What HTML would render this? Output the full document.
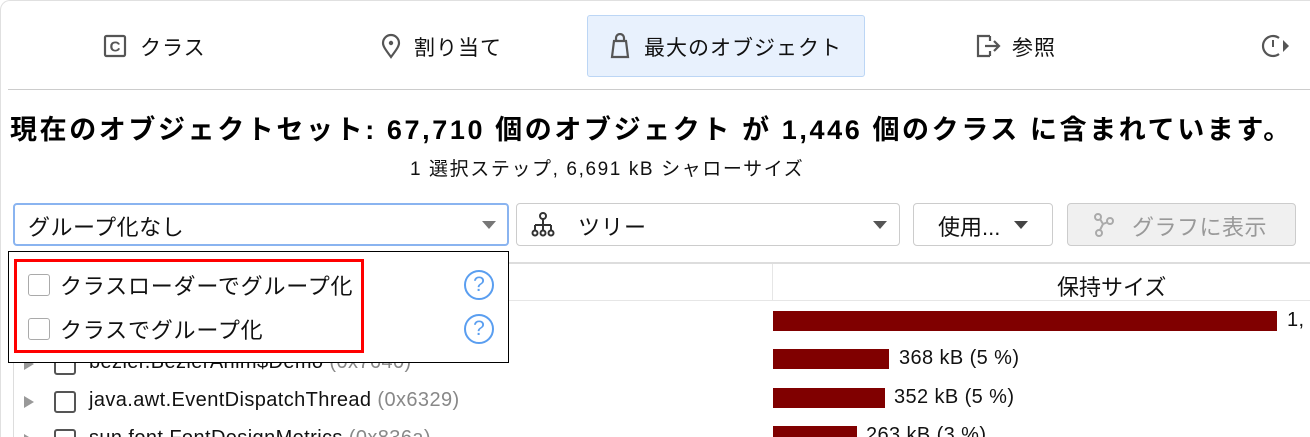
<!DOCTYPE html>
<html><head><meta charset="utf-8"><style>
*{box-sizing:border-box;margin:0;padding:0}
html,body{width:1310px;height:437px;overflow:hidden}
body{background:#fff;font-family:"Liberation Sans","Noto Sans CJK JP",sans-serif;color:#111;position:relative}
.a{position:absolute;white-space:nowrap}
.tab{font-size:21px;top:32px;letter-spacing:1px}
.cb{position:absolute;width:22px;height:22px;border:2px solid #555;border-radius:3px;background:#fff}
.bar{position:absolute;background:#800000;height:20px;left:773px}
.rt{font-size:20px;letter-spacing:0.4px}
.help{position:absolute;width:30px;height:30px;border:2.5px solid #5a9ef0;border-radius:50%;color:#5a9ef0;font-size:21px;text-align:center;line-height:25px}
</style></head><body>
<div class="a" style="left:0;top:0;width:1310px;height:437px;border-left:1px solid #e0e0e0;border-top:1px solid #e0e0e0;border-top-left-radius:10px"></div>
<div class="a" style="left:587px;top:15px;width:278px;height:62px;background:#e8f1fd;border:1px solid #bcd6f5;border-radius:3px"></div>
<svg class="a" style="left:103px;top:34px" width="24" height="24" viewBox="0 0 24 24"><rect x="2" y="2" width="20" height="20" rx="1.5" fill="none" stroke="#555" stroke-width="2.2"/><text x="12" y="17.5" font-size="15" font-weight="bold" text-anchor="middle" fill="#555" font-family="Liberation Sans">C</text></svg>
<div class="a tab" style="left:140px">クラス</div>
<svg class="a" style="left:379px;top:33px" width="24" height="26" viewBox="0 0 24 26"><path d="M12 24C6 16 4 13 4 10a8 8 0 0 1 16 0c0 3-2 6-8 14z" fill="none" stroke="#555" stroke-width="2.2"/><circle cx="12" cy="10" r="2.2" fill="#555"/></svg>
<div class="a tab" style="left:414px">割り当て</div>
<svg class="a" style="left:608px;top:33px" width="24" height="26" viewBox="0 0 24 26"><path d="M4 24h16l-2-16H6z M8 8V5a4 4 0 0 1 8 0v3" fill="none" stroke="#555" stroke-width="2.2"/></svg>
<div class="a tab" style="left:644px">最大のオブジェクト</div>
<svg class="a" style="left:976px;top:34px" width="26" height="24" viewBox="0 0 26 24"><path d="M14 2H2v20h12M14 2v5M14 22v-5M9 12h14M18 7l5 5-5 5" fill="none" stroke="#555" stroke-width="2.2"/></svg>
<div class="a tab" style="left:1012px">参照</div>
<svg class="a" style="left:1261px;top:34px" width="30" height="24" viewBox="0 0 30 24"><path d="M18 4a10 10 0 1 0 0 16" fill="none" stroke="#555" stroke-width="2.2"/><path d="M12 6v7" stroke="#555" stroke-width="2"/><path d="M22 6l6 6-6 6z" fill="#555"/></svg>
<div class="a" style="left:8px;top:89px;width:1302px;height:1px;background:#ccc"></div>
<div class="a" style="left:10px;top:108px;font-size:27px;font-weight:bold;letter-spacing:2.6px;color:#000">現在のオブジェクトセット: 67,710 個のオブジェクト が 1,446 個のクラス に含まれています。</div>
<div class="a" style="left:410px;top:154px;font-size:19px;letter-spacing:1.6px">1 選択ステップ, 6,691 kB シャローサイズ</div>
<div class="a" style="left:13px;top:203px;width:496px;height:43px;border:2px solid #8ab4f0;border-radius:4px"></div>
<div class="a" style="left:28px;top:210px;font-size:22px;letter-spacing:0.5px">グループ化なし</div>
<div class="a" style="left:482px;top:221px;border-left:7px solid transparent;border-right:7px solid transparent;border-top:8px solid #777"></div>
<div class="a" style="left:516px;top:203px;width:384px;height:43px;border:1px solid #ccc;border-radius:4px"></div>
<svg class="a" style="left:530px;top:212px" width="26" height="26" viewBox="0 0 26 26"><circle cx="13" cy="4" r="3" fill="none" stroke="#333" stroke-width="2"/><path d="M13 7v6M5 13h16M5 13v6M13 13v6M21 13v6" stroke="#333" stroke-width="2" fill="none"/><circle cx="5" cy="21" r="2.5" fill="none" stroke="#333" stroke-width="2"/><circle cx="13" cy="21" r="2.5" fill="none" stroke="#333" stroke-width="2"/><circle cx="21" cy="21" r="2.5" fill="none" stroke="#333" stroke-width="2"/></svg>
<div class="a" style="left:578px;top:210px;font-size:22px;letter-spacing:1px">ツリー</div>
<div class="a" style="left:873px;top:221px;border-left:7px solid transparent;border-right:7px solid transparent;border-top:8px solid #555"></div>
<div class="a" style="left:913px;top:203px;width:140px;height:43px;border:1px solid #ccc;border-radius:4px"></div>
<div class="a" style="left:938px;top:210px;font-size:22px">使用...</div>
<div class="a" style="left:1014px;top:221px;border-left:7px solid transparent;border-right:7px solid transparent;border-top:8px solid #444"></div>
<div class="a" style="left:1067px;top:203px;width:229px;height:43px;border:1px solid #ccc;border-radius:4px;background:#f0f0f0"></div>
<svg class="a" style="left:1092px;top:212px" width="24" height="26" viewBox="0 0 24 26"><g fill="none" stroke="#aaa" stroke-width="2"><circle cx="6" cy="5" r="3"/><circle cx="18" cy="9" r="3"/><circle cx="7" cy="21" r="3"/><path d="M8 7l3 5 5-2M11 12l-3 6"/></g></svg>
<div class="a" style="left:1132px;top:210px;font-size:22px;letter-spacing:0.5px;color:#999">グラフに表示</div>
<div class="a" style="left:8px;top:262px;width:1302px;height:2px;background:#ddd"></div>
<div class="a" style="left:772px;top:264px;width:1px;height:36px;background:#e6e6e6"></div>
<div class="a" style="left:8px;top:300px;width:1302px;height:1px;background:#e6e6e6"></div>
<div class="a" style="left:1057px;top:270px;font-size:22px">保持サイズ</div>
<div class="a" style="left:13px;top:300px;width:1px;height:137px;background:#ddd"></div>
<div class="bar" style="top:311px;width:504px"></div><div class="a rt" style="left:1287px;top:309px">1,</div>
<div class="bar" style="top:349px;width:116px"></div><div class="a rt" style="left:899px;top:347px">368 kB (5 %)</div>
<div class="bar" style="top:388px;width:112px"></div><div class="a rt" style="left:894px;top:386px">352 kB (5 %)</div>
<div class="bar" style="top:426px;width:84px"></div><div class="a rt" style="left:866px;top:424px">263 kB (3 %)</div>
<div class="a" style="left:24px;top:358px;border-top:6px solid transparent;border-bottom:6px solid transparent;border-left:10px solid #999"></div>
<div class="cb" style="left:54px;top:353px"></div><div class="a rt" style="left:89px;top:351px">bezier.BezierAnim$Demo <span style="color:#888">(0x7640)</span></div>
<div class="a" style="left:24px;top:396px;border-top:6px solid transparent;border-bottom:6px solid transparent;border-left:10px solid #999"></div>
<div class="cb" style="left:54px;top:391px"></div><div class="a rt" style="left:89px;top:389px">java.awt.EventDispatchThread <span style="color:#888">(0x6329)</span></div>
<div class="a" style="left:24px;top:434px;border-top:6px solid transparent;border-bottom:6px solid transparent;border-left:10px solid #999"></div>
<div class="cb" style="left:54px;top:429px"></div><div class="a rt" style="left:89px;top:427px">sun.font.FontDesignMetrics <span style="color:#888">(0x836a)</span></div>
<div class="a" style="left:8px;top:251px;width:501px;height:112px;background:#fff;border:1px solid #000"></div>
<div class="a" style="left:14px;top:259px;width:350px;height:94px;border:3px solid #f00"></div>
<div class="cb" style="left:28px;top:274px;border:1px solid #aaa"></div><div class="a" style="left:60px;top:269px;font-size:22px;letter-spacing:0.8px">クラスローダーでグループ化</div>
<div class="cb" style="left:28px;top:318px;border:1px solid #aaa"></div><div class="a" style="left:60px;top:313px;font-size:22px;letter-spacing:0.8px">クラスでグループ化</div>
<div class="help" style="left:464px;top:270px">?</div>
<div class="help" style="left:464px;top:314px">?</div>
</body></html>
